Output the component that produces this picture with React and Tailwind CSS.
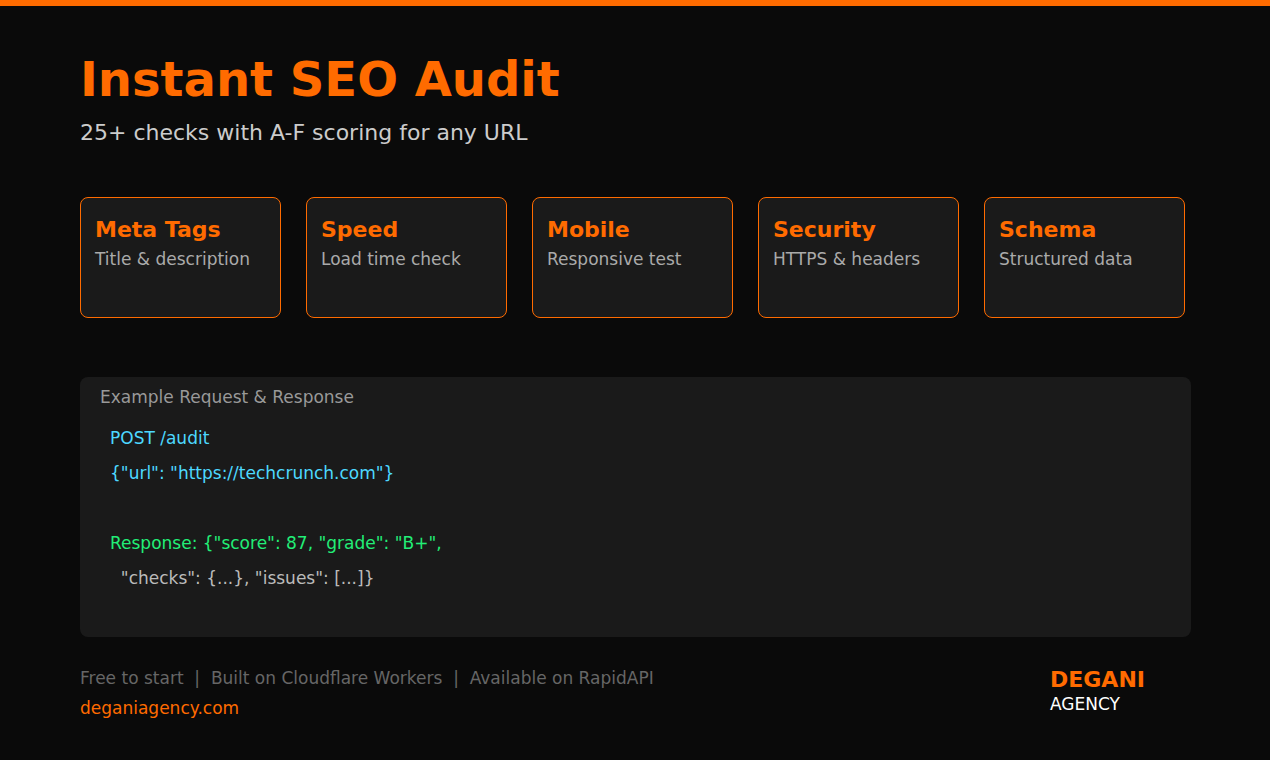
export default function App() {
  const cards = [
    ['Meta Tags', 'Title & description'],
    ['Speed', 'Load time check'],
    ['Mobile', 'Responsive test'],
    ['Security', 'HTTPS & headers'],
    ['Schema', 'Structured data'],
  ]
  return (
    <div className="w-[1270px] h-[760px] bg-[#0a0a0a] overflow-hidden" style={{ fontFamily: '"DejaVu Sans", sans-serif' }}>
      <div className="h-[6px] bg-[#ff6b00]" />
      <div className="px-[80px]">
        <h1 className="mt-[44px] text-[48px] leading-[58px] font-bold text-[#ff6b00]">Instant SEO Audit</h1>
        <p className="mt-[12px] text-[22px] leading-[26px] text-[#cccccc]">25+ checks with A-F scoring for any URL</p>
        <div className="mt-[51px] flex gap-[25px]">
          {cards.map(([t, d]) => (
            <div key={t} className="w-[201px] h-[121px] rounded-[8px] border border-[#ff6b00] bg-[#1a1a1a] px-[14px] pt-[18px]">
              <div className="text-[22px] leading-[28px] font-bold text-[#ff6b00]">{t}</div>
              <div className="mt-[4px] text-[17px] leading-[22px] text-[#aaaaaa]">{d}</div>
            </div>
          ))}
        </div>
        <div className="mt-[59px] w-[1111px] h-[260px] rounded-[8px] bg-[#1a1a1a] pl-[20px] pt-[9px] text-[17px]">
          <div className="leading-[22px] text-[#999999]">Example Request &amp; Response</div>
          <div className="pl-[10px] mt-[13px] leading-[35px] whitespace-pre">
            <div className="text-[#4dd8ff]">POST /audit</div>
            <div className="text-[#4dd8ff]">{'{"url": "https://techcrunch.com"}'}</div>
            <div>&nbsp;</div>
            <div className="text-[#22ee77]">{'Response: {"score": 87, "grade": "B+",'}</div>
            <div className="text-[#bbbbbb]">{'  "checks": {...}, "issues": [...]}'}</div>
          </div>
        </div>
        <div className="mt-[29px] flex justify-between w-[1065px]">
          <div>
            <div className="text-[17px] leading-[24px] text-[#666666] whitespace-pre">Free to start  |  Built on Cloudflare Workers  |  Available on RapidAPI</div>
            <div className="mt-[6px] text-[17px] leading-[24px] text-[#ff6b00]">deganiagency.com</div>
          </div>
          <div className="pt-[-2px]">
            <div className="text-[22px] leading-[28px] font-bold text-[#ff6b00]">DEGANI</div>
            <div className="text-[17px] leading-[20px] text-white">AGENCY</div>
          </div>
        </div>
      </div>
    </div>
  )
}
